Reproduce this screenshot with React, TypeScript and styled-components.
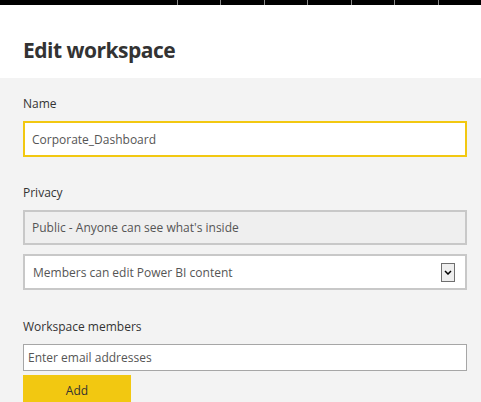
import React, { useState } from 'react';
import styled, { createGlobalStyle } from 'styled-components';

const GlobalStyle = createGlobalStyle`
  html, body {
    margin: 0;
    padding: 0;
    background: #f3f3f3;
    font-family: 'Open Sans', 'Noto Sans', sans-serif;
  }
  * {
    box-sizing: border-box;
  }
`;

const Page = styled.div`
  width: 481px;
  height: 402px;
  overflow: hidden;
  background: #f3f3f3;
`;

const TopBar = styled.div`
  height: 5px;
  background: #000;
  display: flex;
  padding-left: 177px;
`;

const TopTab = styled.div`
  width: 44px;
  height: 100%;
  border-left: 1px solid #8a8a8a;
`;

const Header = styled.div`
  background: #fff;
  height: 73px;
  padding: 30px 23px 0;
`;

const Title = styled.h1`
  margin: 0;
  font-size: 21px;
  line-height: 30px;
  font-weight: 700;
  color: #333;
  letter-spacing: -0.5px;
`;

const Form = styled.div`
  padding: 17px 14px 0 23px;
  display: flex;
  flex-direction: column;
`;

const Label = styled.label<{ $top?: number }>`
  display: block;
  font-size: 12px;
  line-height: 17px;
  color: #333;
  margin-top: ${(p) => p.$top ?? 0}px;
  margin-bottom: 9px;
`;

const TextBox = styled.input<{ $focused?: boolean }>`
  display: block;
  width: 100%;
  height: 36px;
  padding: 0 7px;
  border: 2px solid ${(p) => (p.$focused ? '#f2c811' : '#c8c8c8')};
  background: #fff;
  outline: none;
  font-family: inherit;
  font-size: 12px;
  color: #555;
`;

const ReadOnlyBox = styled.div`
  height: 35px;
  display: flex;
  align-items: center;
  padding: 0 7px;
  border: 2px solid #c8c8c8;
  background: #efefef;
  font-size: 12px;
  color: #555;
`;

const SelectBox = styled.div`
  margin-top: 9px;
  height: 36px;
  display: flex;
  align-items: center;
  justify-content: space-between;
  padding: 0 10px 0 8px;
  border: 2px solid #c8c8c8;
  background: #fff;
  font-size: 12px;
  color: #555;
`;

const ArrowBox = styled.span`
  width: 14px;
  height: 19px;
  border: 1px solid #6f6f6f;
  background: #eeeeee;
  display: flex;
  align-items: center;
  justify-content: center;
`;

const EmailInput = styled.input`
  display: block;
  width: 100%;
  height: 27px;
  padding: 0 4px;
  border: 1px solid #a6a6a6;
  background: #fff;
  outline: none;
  font-family: inherit;
  font-size: 12px;
  color: #555;
  &::placeholder {
    color: #555;
  }
`;

const AddButton = styled.button`
  margin-top: 4px;
  width: 108px;
  height: 30px;
  border: none;
  background: #f2c811;
  font-family: inherit;
  font-size: 12px;
  color: #333;
  padding: 0;
`;

const App: React.FC = () => {
  const [name, setName] = useState('Corporate_Dashboard');
  const [email, setEmail] = useState('');

  return (
    <Page>
      <GlobalStyle />
      <TopBar>
        {[0, 1, 2, 3, 4, 5, 6].map((i) => (
          <TopTab key={i} />
        ))}
      </TopBar>
      <Header>
        <Title>Edit workspace</Title>
      </Header>
      <Form>
        <Label>Name</Label>
        <TextBox $focused value={name} onChange={(e) => setName(e.target.value)} />
        <Label $top={27}>Privacy</Label>
        <ReadOnlyBox>Public - Anyone can see what's inside</ReadOnlyBox>
        <SelectBox>
          <span>Members can edit Power BI content</span>
          <ArrowBox>
            <svg width="8" height="5" viewBox="0 0 8 5">
              <path d="M1 1 L4 4 L7 1" fill="none" stroke="#000" strokeWidth="1.5" />
            </svg>
          </ArrowBox>
        </SelectBox>
        <Label $top={28}>Workspace members</Label>
        <EmailInput
          placeholder="Enter email addresses"
          value={email}
          onChange={(e) => setEmail(e.target.value)}
        />
        <AddButton>Add</AddButton>
      </Form>
    </Page>
  );
};

export default App;
